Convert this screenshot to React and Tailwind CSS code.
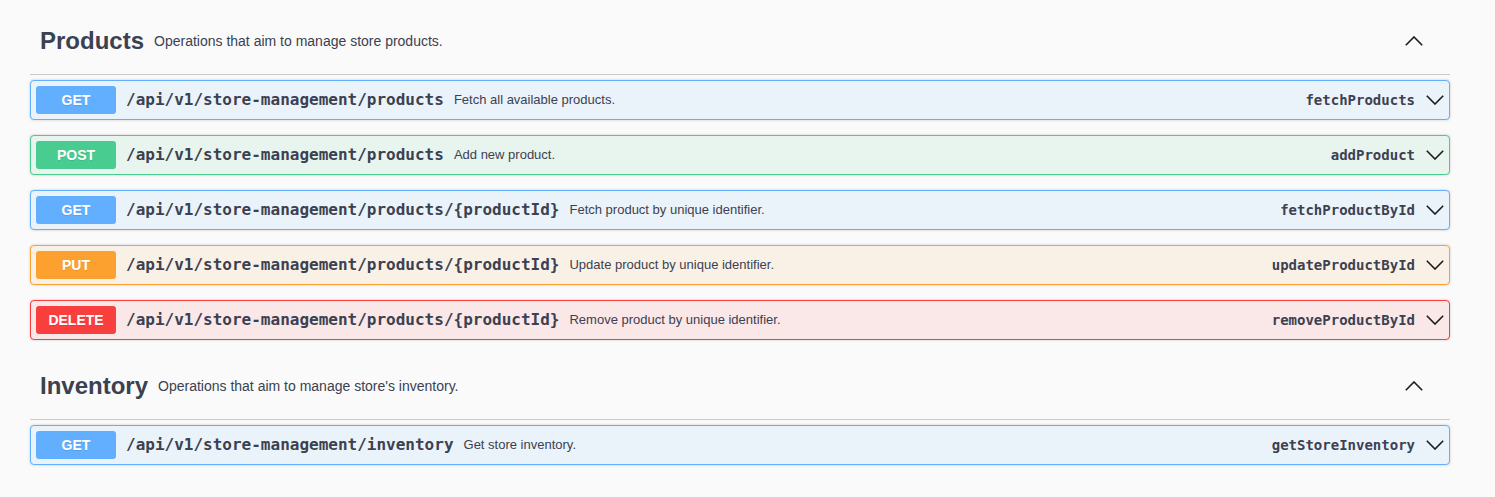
import React from "react";

const sans = { fontFamily: '"Liberation Sans", Arial, sans-serif' };

const METHOD_STYLES = {
  GET: { row: "border-[#61affe] bg-[#ebf3fa]", badge: "bg-[#61affe]" },
  POST: { row: "border-[#49cc90] bg-[#e8f5ef]", badge: "bg-[#49cc90]" },
  PUT: { row: "border-[#fca130] bg-[#faf1e6]", badge: "bg-[#fca130]" },
  DELETE: { row: "border-[#f93e3e] bg-[#fae7e7]", badge: "bg-[#f93e3e]" },
};

const sections = [
  {
    name: "Products",
    description: "Operations that aim to manage store products.",
    ops: [
      { method: "GET", path: "/api/v1/store-management/products", summary: "Fetch all available products.", id: "fetchProducts" },
      { method: "POST", path: "/api/v1/store-management/products", summary: "Add new product.", id: "addProduct" },
      { method: "GET", path: "/api/v1/store-management/products/{productId}", summary: "Fetch product by unique identifier.", id: "fetchProductById" },
      { method: "PUT", path: "/api/v1/store-management/products/{productId}", summary: "Update product by unique identifier.", id: "updateProductById" },
      { method: "DELETE", path: "/api/v1/store-management/products/{productId}", summary: "Remove product by unique identifier.", id: "removeProductById" },
    ],
  },
  {
    name: "Inventory",
    description: "Operations that aim to manage store's inventory.",
    ops: [
      { method: "GET", path: "/api/v1/store-management/inventory", summary: "Get store inventory.", id: "getStoreInventory" },
    ],
  },
];

function Chevron({ up = false }) {
  return (
    <svg width="18" height="10" viewBox="0 0 18 10" className="shrink-0">
      <polyline
        points={up ? "0.8,9.2 9,1 17.2,9.2" : "0.8,0.8 9,9 17.2,0.8"}
        fill="none"
        stroke="#1b1b1b"
        strokeWidth="1.6"
      />
    </svg>
  );
}

function Operation({ op }) {
  const s = METHOD_STYLES[op.method];
  return (
    <div
      className={`flex h-10 items-center rounded border px-[5px] shadow-[0_0_3px_rgba(0,0,0,0.19)] ${s.row}`}
    >
      <div
        className={`flex h-7 w-20 shrink-0 items-center justify-center rounded-[3px] text-sm font-bold text-white [text-shadow:0_1px_0_rgba(0,0,0,0.1)] ${s.badge}`}
        style={sans}
      >
        {op.method}
      </div>
      <span
        className="ml-[10px] text-base font-semibold whitespace-nowrap text-[#3b4151]"
        style={{ fontFamily: '"DejaVu Sans Mono", monospace' }}
      >
        {op.path}
      </span>
      <span className="ml-[10px] text-[13px] whitespace-nowrap text-[#3b4151]" style={sans}>
        {op.summary}
      </span>
      <div className="flex-1" />
      <span
        className="text-sm font-semibold text-[#3b4151]"
        style={{ fontFamily: '"DejaVu Sans Mono", monospace' }}
      >
        {op.id}
      </span>
      <div className="ml-[11px]">
        <Chevron />
      </div>
    </div>
  );
}

function Section({ section }) {
  return (
    <div>
      <div className="flex h-[67px] items-center border-b border-[#3b4151]/25 pr-[27px] pl-[10px]">
        <h3 className="text-2xl leading-none font-bold text-[#3b4151]" style={sans}>
          {section.name}
        </h3>
        <span className="ml-[10px] text-sm text-[#3b4151]" style={sans}>
          {section.description}
        </span>
        <div className="flex-1" />
        <Chevron up />
      </div>
      <div className="mt-[5px] flex flex-col gap-[15px]">
        {section.ops.map((op, i) => (
          <Operation key={i} op={op} />
        ))}
      </div>
    </div>
  );
}

export default function App() {
  return (
    <div className="min-h-[497px] bg-[#fafafa] pt-[8px]">
      <div className="ml-[30px] flex w-[1420px] flex-col gap-[13px]">
        {sections.map((s) => (
          <Section key={s.name} section={s} />
        ))}
      </div>
    </div>
  );
}
